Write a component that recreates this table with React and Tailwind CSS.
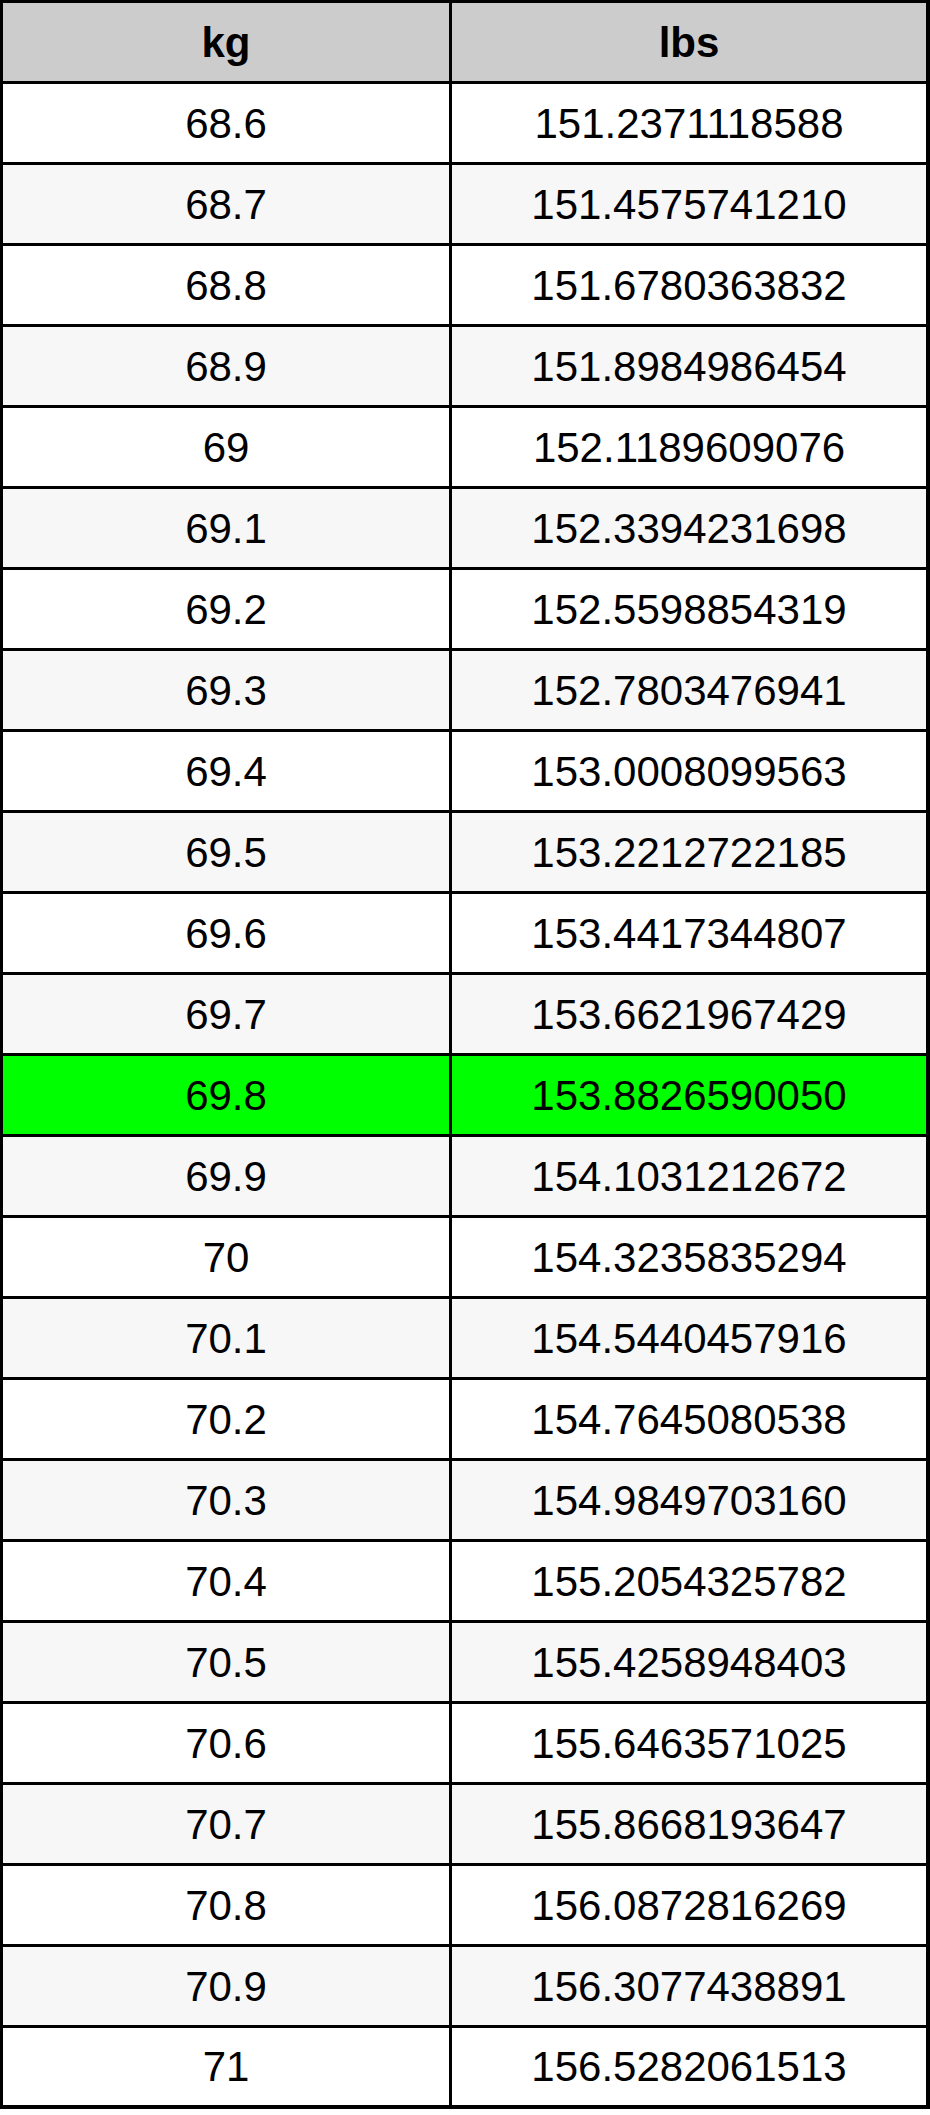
import React from "react";

const rows = [
  ["68.6", "151.2371118588"],
  ["68.7", "151.4575741210"],
  ["68.8", "151.6780363832"],
  ["68.9", "151.8984986454"],
  ["69", "152.1189609076"],
  ["69.1", "152.3394231698"],
  ["69.2", "152.5598854319"],
  ["69.3", "152.7803476941"],
  ["69.4", "153.0008099563"],
  ["69.5", "153.2212722185"],
  ["69.6", "153.4417344807"],
  ["69.7", "153.6621967429"],
  ["69.8", "153.8826590050"],
  ["69.9", "154.1031212672"],
  ["70", "154.3235835294"],
  ["70.1", "154.5440457916"],
  ["70.2", "154.7645080538"],
  ["70.3", "154.9849703160"],
  ["70.4", "155.2054325782"],
  ["70.5", "155.4258948403"],
  ["70.6", "155.6463571025"],
  ["70.7", "155.8668193647"],
  ["70.8", "156.0872816269"],
  ["70.9", "156.3077438891"],
  ["71", "156.5282061513"],
];

export default function App() {
  return (
    <div className="w-[930px] bg-white font-['Liberation_Sans',Arial,sans-serif] text-black">
      <div className="border-t-[3px] border-l-[3px] border-r-[4px] border-b-[4px] border-black">
        <div className="grid grid-cols-[449px_1fr] h-[81px] bg-[#cccccc] border-b-[3px] border-black font-bold text-[42px]">
          <div className="flex items-center justify-center border-r-[3px] border-black">kg</div>
          <div className="flex items-center justify-center">lbs</div>
        </div>
        {rows.map(([kg, lbs], i) => {
          const bg = kg === "69.8" ? "bg-[#00ff00]" : i % 2 === 0 ? "bg-white" : "bg-[#f7f7f7]";
          const last = i === rows.length - 1;
          return (
            <div
              key={kg}
              className={`grid grid-cols-[449px_1fr] text-[42px] ${bg} ${last ? "h-[77px]" : "h-[81px] border-b-[3px] border-black"}`}
            >
              <div className="flex items-center justify-center border-r-[3px] border-black">{kg}</div>
              <div className="flex items-center justify-center">{lbs}</div>
            </div>
          );
        })}
      </div>
    </div>
  );
}
